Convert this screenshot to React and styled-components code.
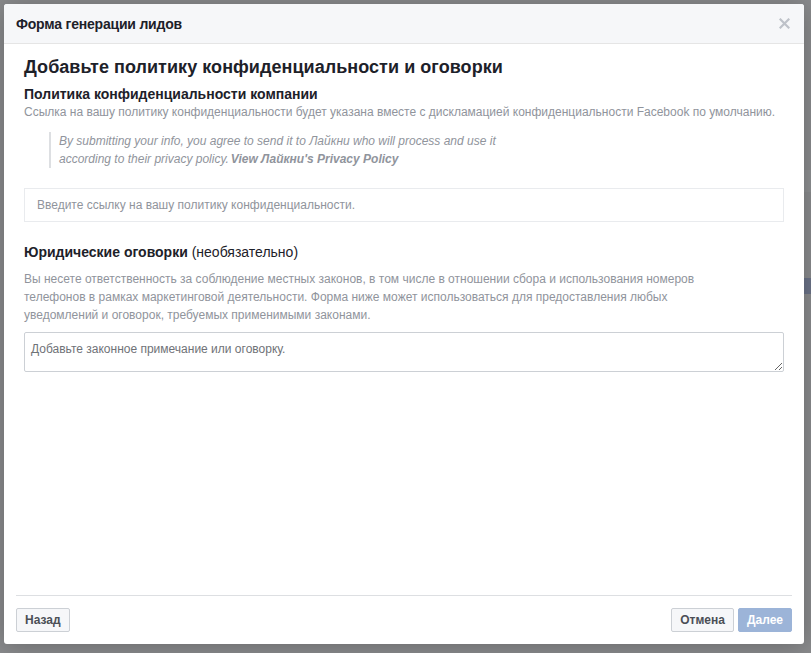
import React from "react";
import styled, { createGlobalStyle } from "styled-components";

const Global = createGlobalStyle`
  html, body { margin: 0; padding: 0; }
  body {
    width: 811px;
    height: 653px;
    overflow: hidden;
    background: #8b8c8e;
    font-family: "Liberation Sans", Arial, Helvetica, sans-serif;
  }
`;

const Backdrop = styled.div`
  position: relative;
  width: 811px;
  height: 653px;
  background: #8a8b8d;
  padding: 4px 7px 9px 4px;
  box-sizing: border-box;
`;

const PageHint = styled.div`
  position: absolute;
  right: 0;
  width: 7px;
  height: ${(p) => p.h}px;
  top: ${(p) => p.t}px;
  background: ${(p) => p.c};
`;

const Modal = styled.div`
  position: relative;
  width: 800px;
  height: 640px;
  background: #fff;
  border-radius: 3px;
  display: flex;
  flex-direction: column;
  box-shadow: 0 2px 26px rgba(0, 0, 0, 0.25);
  overflow: hidden;
`;

const Header = styled.div`
  height: 39px;
  flex: none;
  background: #f6f7f9;
  border-bottom: 1px solid #e5e5e5;
  display: flex;
  align-items: center;
  justify-content: space-between;
  padding: 0 12px;
`;

const HeaderTitle = styled.div`
  font-size: 14px;
  font-weight: bold;
  color: #1d2129;
  letter-spacing: -0.2px;
`;

const CloseBtn = styled.button`
  border: 0;
  background: transparent;
  padding: 0;
  width: 16px;
  height: 16px;
  display: flex;
  align-items: center;
  justify-content: center;
  cursor: pointer;
`;

const Body = styled.div`
  flex: 1;
  padding: 12px 20px 0 20px;
`;

const Heading = styled.h2`
  margin: 0;
  font-size: 18px;
  line-height: 22px;
  font-weight: bold;
  color: #1d2129;
  letter-spacing: 0.05px;
`;

const SubHeading = styled.div`
  margin-top: ${(p) => p.mt || 0}px;
  font-size: 14px;
  line-height: 18px;
  font-weight: bold;
  color: #1d2129;
`;

const Optional = styled.span`
  font-weight: normal;
  color: #1d2129;
`;

const Hint = styled.div`
  margin-top: ${(p) => p.mt || 0}px;
  font-size: 12px;
  line-height: 18px;
  color: #90949c;
`;

const Quote = styled.blockquote`
  margin: 11px 0 0 25px;
  padding: 0 0 0 8px;
  border-left: 2px solid #dddfe2;
  font-size: 12px;
  line-height: 18px;
  font-style: italic;
  color: #90949c;
  max-width: 470px;
`;

const QuoteLink = styled.b`
  font-weight: bold;
  padding-left: 2px;
`;

const TextInput = styled.input`
  display: block;
  margin-top: 20px;
  width: 100%;
  height: 34px;
  box-sizing: border-box;
  border: 1px solid #e9ebee;
  padding: 0 12px;
  font-family: inherit;
  font-size: 12px;
  color: #1d2129;
  outline: none;
  &::placeholder { color: #90949c; }
`;

const TextArea = styled.textarea`
  display: block;
  margin-top: 8px;
  width: 100%;
  height: 40px;
  box-sizing: border-box;
  border: 1px solid #ccd0d5;
  border-radius: 2px;
  padding: 8px 6px;
  font-family: inherit;
  font-size: 12px;
  line-height: 16px;
  color: #1d2129;
  outline: none;
  resize: vertical;
  &::placeholder { color: #6f7277; }
`;

const Footer = styled.div`
  flex: none;
  margin: 0 12px;
  border-top: 1px solid #dddfe2;
  padding: 12px 0;
  display: flex;
  align-items: center;
`;

const Spacer = styled.div`
  flex: 1;
`;

const Button = styled.button`
  height: 24px;
  box-sizing: border-box;
  padding: 0 8px;
  margin-left: ${(p) => p.ml || 0}px;
  border: 1px solid ${(p) => (p.primary ? "#9cb4d8" : "#ccd0d5")};
  border-radius: 2px;
  background: ${(p) => (p.primary ? "#9cb4d8" : "#f6f7f9")};
  color: ${(p) => (p.primary ? "#fff" : "#4b4f56")};
  font-family: inherit;
  font-size: 12px;
  font-weight: bold;
  line-height: 22px;
  cursor: pointer;
`;

export default function App() {
  return (
    <>
      <Global />
      <Backdrop>
        <PageHint t={0} h={653} c="#8a8b8d" />
        <PageHint t={170} h={22} c="#8e9092" />
        <PageHint t={278} h={16} c="#6b7388" />
        <Modal>
          <Header>
            <HeaderTitle>Форма генерации лидов</HeaderTitle>
            <CloseBtn aria-label="Закрыть">
              <svg width="11" height="11" viewBox="0 0 11 11">
                <path d="M1.5 1.5 L9.5 9.5 M9.5 1.5 L1.5 9.5" stroke="#bec2c9" strokeWidth="2.2" strokeLinecap="square" />
              </svg>
            </CloseBtn>
          </Header>
          <Body>
            <Heading>Добавьте политику конфиденциальности и оговорки</Heading>
            <SubHeading mt={7}>Политика конфиденциальности компании</SubHeading>
            <Hint>
              Ссылка на вашу политику конфиденциальности будет указана вместе с дискламацией конфиденциальности Facebook по умолчанию.
            </Hint>
            <Quote>
              By submitting your info, you agree to send it to Лайкни who will process and use it
              <br />
              according to their privacy policy.<QuoteLink>View Лайкни's Privacy Policy</QuoteLink>
            </Quote>
            <TextInput placeholder="Введите ссылку на вашу политику конфиденциальности." />
            <SubHeading mt={21}>
              Юридические оговорки <Optional>(необязательно)</Optional>
            </SubHeading>
            <Hint mt={9}>
              Вы несете ответственность за соблюдение местных законов, в том числе в отношении сбора и использования номеров
              <br />
              телефонов в рамках маркетинговой деятельности. Форма ниже может использоваться для предоставления любых
              <br />
              уведомлений и оговорок, требуемых применимыми законами.
            </Hint>
            <TextArea placeholder="Добавьте законное примечание или оговорку." />
          </Body>
          <Footer>
            <Button>Назад</Button>
            <Spacer />
            <Button>Отмена</Button>
            <Button primary ml={4}>Далее</Button>
          </Footer>
        </Modal>
      </Backdrop>
    </>
  );
}
